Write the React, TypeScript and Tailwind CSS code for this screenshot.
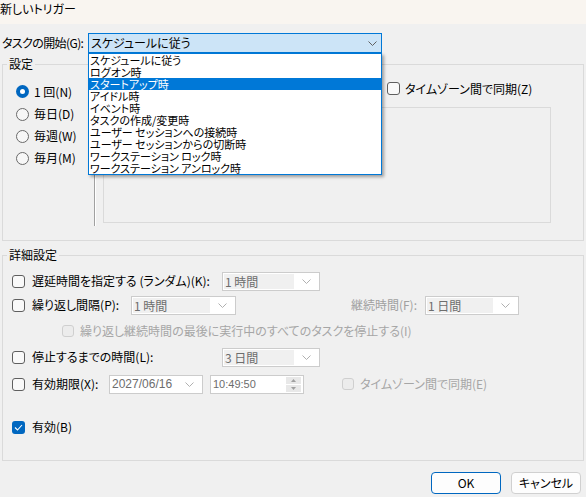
import React from "react";

const Chevron: React.FC<{ color?: string }> = ({ color = "#8a8a8a" }) => (
  <svg width="9" height="5" viewBox="0 0 9 5" className="shrink-0">
    <path d="M0.5 0.5 L4.5 4.5 L8.5 0.5" fill="none" stroke={color} strokeWidth="1" />
  </svg>
);

const Check: React.FC<{ checked?: boolean; disabled?: boolean }> = ({ checked, disabled }) => {
  if (checked) {
    return (
      <div className="w-[13px] h-[13px] rounded-[3px] bg-[#0067c0] flex items-center justify-center shrink-0">
        <svg width="9" height="7" viewBox="0 0 9 7">
          <path d="M1 3.5 L3.5 6 L8 1" fill="none" stroke="white" strokeWidth="1.1" />
        </svg>
      </div>
    );
  }
  if (disabled) {
    return <div className="w-[12px] h-[12px] rounded-[3px] border border-[#cfcfcf] bg-[#ececec] shrink-0" />;
  }
  return <div className="w-[13px] h-[13px] rounded-[3px] border border-[#5f5f5f] bg-[#f9f9f9] shrink-0" />;
};

const Radio: React.FC<{ on?: boolean }> = ({ on }) =>
  on ? (
    <div className="w-[13px] h-[13px] rounded-full bg-[#0067c0] flex items-center justify-center shrink-0">
      <div className="w-[5px] h-[5px] rounded-full bg-white" />
    </div>
  ) : (
    <div className="w-[13px] h-[13px] rounded-full border border-[#6a6a6a] bg-[#f7f7f7] shrink-0" />
  );

const Combo: React.FC<{ value: string; width: string }> = ({ value, width }) => (
  <div className={`${width} h-[19px] border border-[#cccccc] bg-white flex items-center pl-[1px] pr-[8px] shrink-0`}>
    <div className="flex-1 h-[15px] bg-[#f0f0f0] text-[#6d6d6d] leading-[15px] pl-[1px] mr-[8px]">{value}</div>
    <Chevron color="#b0b0b0" />
  </div>
);

const items = [
  "スケジュールに従う",
  "ログオン時",
  "スタートアップ時",
  "アイドル時",
  "イベント時",
  "タスクの作成/変更時",
  "ユーザー セッションへの接続時",
  "ユーザー セッションからの切断時",
  "ワークステーション ロック時",
  "ワークステーション アンロック時",
];

export default function App() {
  return (
    <div className="relative w-[586px] h-[497px] bg-[#f0f0f0] overflow-hidden text-[12px] text-black whitespace-nowrap font-['Noto_Sans_CJK_JP','Liberation_Sans',sans-serif] [font-feature-settings:'palt']">
      <div className="h-[24px] bg-[#f9f5f0] pt-[2px] leading-[14px]">新しいトリガー</div>

      <div className="mt-[9px] h-[20px] flex items-center">
        <div className="w-[88px] pl-[2px] shrink-0 tracking-[-0.6px]">タスクの開始(G):</div>
        <div className="w-[294px] h-[20px] border border-[#0078d7] bg-[#cce4f7] flex items-center pl-[2px] pr-[4px]">
          <div className="flex-1">スケジュールに従う</div>
          <Chevron color="#606060" />
        </div>
      </div>

      <div className="relative mt-[11px] ml-[2px] w-[582px] h-[177px] border border-[#dadada] flex">
        <div className="absolute -top-[9px] left-[4px] px-[2px] bg-[#f0f0f0] leading-[16px]">設定</div>
        <div className="w-[91px] pt-[15px] pl-[13px] flex flex-col">
          {[
            ["1 回(N)", true, "h-[23px]"],
            ["毎日(D)", false, "h-[22px]"],
            ["毎週(W)", false, "h-[22px]"],
            ["毎月(M)", false, "h-[22px]"],
          ].map(([label, on, h]) => (
            <div key={label as string} className={`${h} flex items-center gap-[5px]`}>
              <Radio on={on as boolean} />
              <span>{label as string}</span>
            </div>
          ))}
        </div>
        <div className="mt-[7px] h-[154px] w-[2px] border-l border-[#a0a0a0] border-r border-r-white" />
        <div className="pl-[7px] flex flex-col">
          <div className="mt-[15px] h-[17px] flex items-center">
            <div className="w-[284px]" />
            <Check />
            <span className="ml-[5px]">タイムゾーン間で同期(Z)</span>
          </div>
          <div className="mt-[10px] w-[448px] h-[116px] border border-[#dadada]" />
        </div>
      </div>

      <div className="relative mt-[14px] ml-[2px] w-[582px] h-[206px] border border-[#dadada] pt-[15px] pl-[9px]">
        <div className="absolute -top-[9px] left-[4px] px-[2px] bg-[#f0f0f0] leading-[16px]">詳細設定</div>

        <div className="h-[20px] flex items-center">
          <Check />
          <span className="ml-[7px] w-[190px]">遅延時間を指定する (ランダム)(K):</span>
          <Combo value="1 時間" width="w-[98px]" />
        </div>

        <div className="mt-[4px] h-[20px] flex items-center">
          <Check />
          <span className="ml-[7px] w-[99px]">繰り返し間隔(P):</span>
          <Combo value="1 時間" width="w-[105px]" />
          <span className="w-[189px] text-right pr-[8px] text-[#a0a0a0]">継続時間(F):</span>
          <Combo value="1 日間" width="w-[94px]" />
        </div>

        <div className="mt-[6px] h-[20px] flex items-center ml-[50px] text-[#a6a6a6]">
          <Check disabled />
          <span className="ml-[6px]">繰り返し継続時間の最後に実行中のすべてのタスクを停止する(I)</span>
        </div>

        <div className="mt-[6px] h-[20px] flex items-center">
          <Check />
          <span className="ml-[7px] w-[190px]">停止するまでの時間(L):</span>
          <Combo value="3 日間" width="w-[98px]" />
        </div>

        <div className="mt-[7px] h-[20px] flex items-center">
          <Check />
          <span className="ml-[7px] w-[77px]">有効期限(X):</span>
          <div className="w-[94px] h-[19px] border border-[#cccccc] bg-white flex items-center pl-[2px] pr-[8px] text-[#6d6d6d] font-['Liberation_Sans',sans-serif] text-[12px]">
            <span className="flex-1">2027/06/16</span>
            <Chevron color="#b0b0b0" />
          </div>
          <div className="ml-[7px] w-[94px] h-[19px] border border-[#cccccc] bg-white flex items-center pl-[2px] pr-[2px] text-[#6d6d6d] font-['Liberation_Sans',sans-serif] text-[11px]">
            <span className="flex-1">10:49:50</span>
            <div className="w-[15px] h-[15px] flex flex-col gap-[1px]">
              <div className="flex-1 bg-[#e8e8e8] flex items-center justify-center">
                <svg width="5" height="3" viewBox="0 0 5 3"><path d="M0 3 L2.5 0 L5 3 Z" fill="#a0a0a0" /></svg>
              </div>
              <div className="flex-1 bg-[#e8e8e8] flex items-center justify-center">
                <svg width="5" height="3" viewBox="0 0 5 3"><path d="M0 0 L2.5 3 L5 0 Z" fill="#a0a0a0" /></svg>
              </div>
            </div>
          </div>
          <div className="ml-[38px] flex items-center text-[#a6a6a6]">
            <Check disabled />
            <span className="ml-[6px]">タイムゾーン間で同期(E)</span>
          </div>
        </div>

        <div className="mt-[23px] h-[20px] flex items-center">
          <Check checked />
          <span className="ml-[7px]">有効(B)</span>
        </div>
      </div>

      <div className="mt-[11px] pr-[5px] flex justify-end gap-[10px]">
        <button className="w-[70px] h-[22px] rounded-[4px] border border-[#0067c0] bg-[#fdfdfd] leading-[20px]">OK</button>
        <button className="w-[70px] h-[22px] rounded-[4px] border border-[#d0d0d0] bg-[#fdfdfd] leading-[20px]">キャンセル</button>
      </div>

      <div className="absolute left-[88px] top-[53px] w-[294px] h-[122px] border border-[#0078d7] bg-white shadow-[2px_2px_3px_rgba(0,0,0,0.35)] text-[11px]">
        {items.map((t, i) => (
          <div
            key={t}
            className={`h-[12px] leading-[12px] pl-[1px] ${i === 2 ? "bg-[#0078d7] text-white" : ""}`}
          >
            {t}
          </div>
        ))}
      </div>
    </div>
  );
}
